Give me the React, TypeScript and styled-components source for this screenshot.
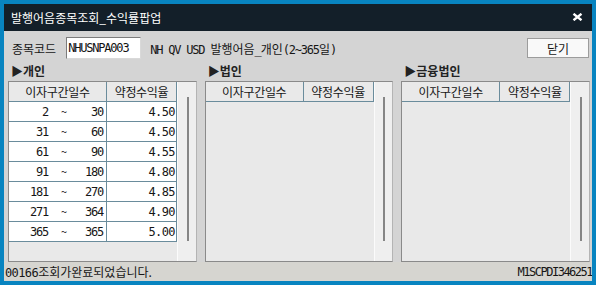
import React from 'react';
import styled, { createGlobalStyle } from 'styled-components';

const GlobalStyle = createGlobalStyle`
  html, body {
    margin: 0;
    padding: 0;
    background: #0884c0;
  }
  body {
    font-family: "Noto Sans CJK KR", "Noto Sans", sans-serif;
    font-size: 12px;
    color: #161616;
  }
  * {
    box-sizing: border-box;
  }
`;

const Window = styled.div`
  width: 596px;
  height: 285px;
  border: 4px solid #0884c0;
  display: flex;
  flex-direction: column;
  background: #d4d4d4;
  overflow: hidden;
`;

const TitleBar = styled.div`
  flex: none;
  height: 27px;
  padding: 0 9px 1px 7px;
  display: flex;
  align-items: center;
  justify-content: space-between;
  background: #131f29;
  color: #ffffff;
`;

const Latin = styled.span<{ $size?: number; $track?: number }>`
  font-family: "DejaVu Sans Mono", "Liberation Mono", monospace;
  font-size: ${(p) => p.$size ?? 12}px;
  letter-spacing: ${(p) => p.$track ?? -1.2}px;
`;

const Body = styled.div`
  flex: 1;
  display: flex;
  flex-direction: column;
  padding: 6px 2px 0 4px;
`;

const CodeRow = styled.div`
  height: 22px;
  display: flex;
  align-items: center;
  padding-left: 4px;
`;

const FieldLabel = styled.span`
  margin-right: 10px;
`;

const CodeInput = styled.input`
  width: 75px;
  height: 22px;
  margin: 0;
  padding: 0 0 0 1px;
  border: 1px solid;
  border-color: #7c7c7c #d9d9d9 #d9d9d9 #7c7c7c;
  background: #ffffff;
  color: #111;
  font-family: "DejaVu Sans Mono", "Liberation Mono", monospace;
  font-size: 12px;
  letter-spacing: -1.2px;
  outline: none;
`;

const ItemName = styled.span`
  margin-left: 9px;
  white-space: nowrap;
`;

const CloseButton = styled.button`
  margin-left: auto;
  margin-right: 1px;
  width: 62px;
  height: 20px;
  padding: 0;
  border: 1px solid #9c9c9c;
  background: #f9f9f9;
  font-family: inherit;
  font-size: 12px;
  color: #161616;
`;

const SectionGrid = styled.div<{ $height: number }>`
  height: ${(p) => p.$height}px;
  display: grid;
  grid-template-columns: 1fr 1fr 1fr;
  column-gap: 8px;
  align-items: center;
`;

const SectionLabel = styled.div`
  padding-left: 3px;
  font-weight: 700;
  color: #222;
`;

const Panel = styled.div`
  display: flex;
  height: 100%;
  border: 1px solid #8a8a8a;
  border-right-color: #b4b4b4;
  background: #e9e9e9;
`;

const TableArea = styled.div`
  width: 168px;
  flex: none;
`;

const Row = styled.div`
  display: grid;
  grid-template-columns: 98px 70px;
  height: 20px;
`;

const Cell = styled.div<{ $head?: boolean }>`
  border-right: 1px solid #6a8c9c;
  border-bottom: 1px solid #6a8c9c;
  background: ${(p) => (p.$head ? '#e9e9e9' : '#ffffff')};
  display: flex;
  align-items: center;
`;

const HeadCell = styled(Cell)`
  justify-content: center;
  letter-spacing: -0.3px;
`;

const DayCell = styled(Cell)`
  display: grid;
  grid-template-columns: 39px 32px 23px;
  align-items: center;
  text-align: right;
`;

const Tilde = styled.span`
  text-align: center;
  font-size: 11px;
  line-height: 1;
`;

const RateCell = styled(Cell)`
  justify-content: flex-end;
  padding-right: 1px;
`;

const Track = styled.div`
  flex: 1;
  display: flex;
  justify-content: center;
  padding-top: 15px;
  background: #efefef;
  border-left: 1px solid #fbfbfb;
`;

const Thumb = styled.div`
  width: 2px;
  height: 144px;
  margin-left: 2px;
  background: #868686;
`;

const StatusBar = styled.div`
  flex: none;
  height: 19px;
  padding-left: 1px;
  display: flex;
  align-items: center;
  justify-content: space-between;
  background: #d6d5d0;
  white-space: nowrap;
`;

type Rate = { from: number; to: number; rate: string };

const individualRates: Rate[] = [
  { from: 2, to: 30, rate: '4.50' },
  { from: 31, to: 60, rate: '4.50' },
  { from: 61, to: 90, rate: '4.55' },
  { from: 91, to: 180, rate: '4.80' },
  { from: 181, to: 270, rate: '4.85' },
  { from: 271, to: 364, rate: '4.90' },
  { from: 365, to: 365, rate: '5.00' },
];

function CloseIcon() {
  return (
    <svg width="11" height="8" viewBox="0 0 11 8">
      <path d="M1.5 0.8 L9.5 7.2 M9.5 0.8 L1.5 7.2" stroke="#fff" strokeWidth="2.4" />
    </svg>
  );
}

function RateTable({ rows }: { rows: Rate[] }) {
  return (
    <Panel>
      <TableArea>
        <Row>
          <HeadCell $head>이자구간일수</HeadCell>
          <HeadCell $head>약정수익율</HeadCell>
        </Row>
        {rows.map((r) => (
          <Row key={r.from}>
            <DayCell>
              <Latin>{r.from}</Latin>
              <Tilde>~</Tilde>
              <Latin>{r.to}</Latin>
            </DayCell>
            <RateCell>
              <Latin $track={-0.6}>{r.rate}</Latin>
            </RateCell>
          </Row>
        ))}
      </TableArea>
      <Track>
        <Thumb />
      </Track>
    </Panel>
  );
}

export default function App() {
  return (
    <>
      <GlobalStyle />
      <Window>
        <TitleBar>
          <span>발행어음종목조회_수익률팝업</span>
          <CloseIcon />
        </TitleBar>
        <Body>
          <CodeRow>
            <FieldLabel>종목코드</FieldLabel>
            <CodeInput readOnly value="NHUSNPA003" />
            <ItemName>
              <Latin>NH QV USD </Latin>발행어음<Latin>_</Latin>개인<Latin>(2~365</Latin>일<Latin>)</Latin>
            </ItemName>
            <CloseButton>닫기</CloseButton>
          </CodeRow>
          <SectionGrid $height={22}>
            <SectionLabel>▶개인</SectionLabel>
            <SectionLabel>▶법인</SectionLabel>
            <SectionLabel>▶금융법인</SectionLabel>
          </SectionGrid>
          <SectionGrid $height={181}>
            <RateTable rows={individualRates} />
            <RateTable rows={[]} />
            <RateTable rows={[]} />
          </SectionGrid>
        </Body>
        <StatusBar>
          <span>
            <Latin $track={-0.6}>00166</Latin>조회가완료되었습니다.
          </span>
          <Latin $track={-1.5}>M1SCPDI346251</Latin>
        </StatusBar>
      </Window>
    </>
  );
}
